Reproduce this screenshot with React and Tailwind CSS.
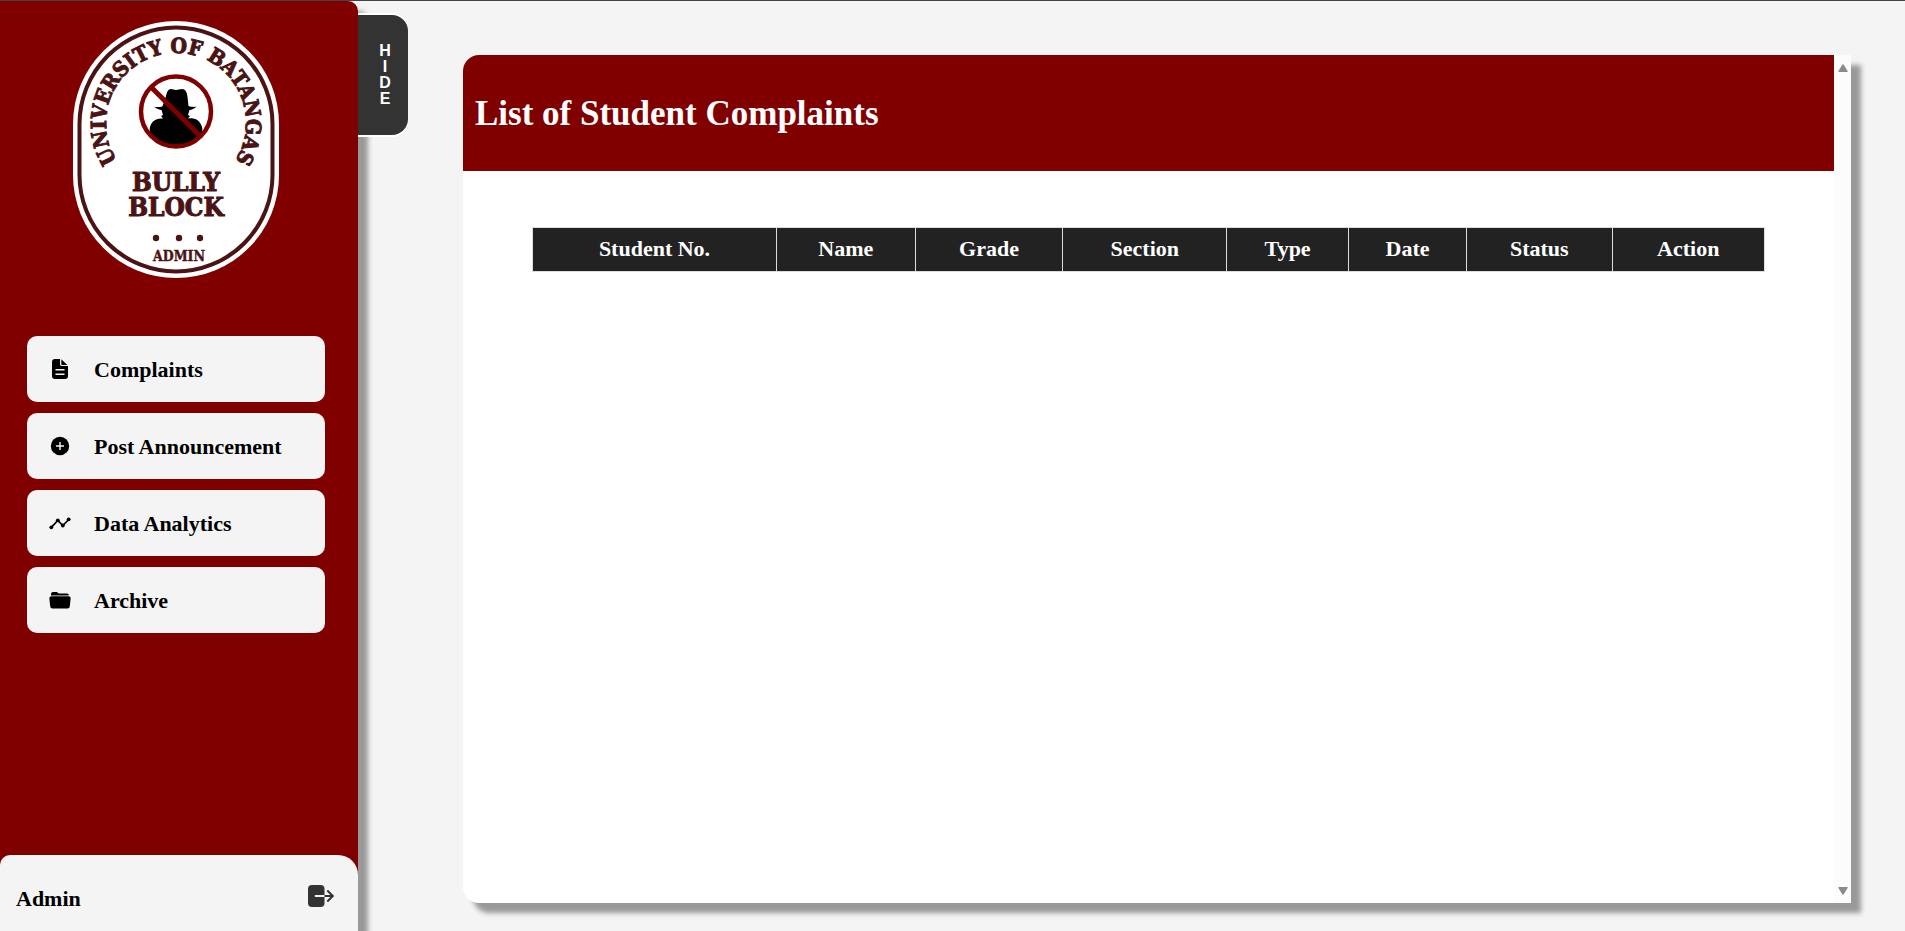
const menu = [
  { label: "Complaints", icon: FileIcon },
  { label: "Post Announcement", icon: PlusIcon },
  { label: "Data Analytics", icon: TimelineIcon },
  { label: "Archive", icon: FolderIcon },
];

const columns = ["Student No.", "Name", "Grade", "Section", "Type", "Date", "Status", "Action"];

function FileIcon() {
  return (
    <svg viewBox="0 0 24 24" className="size-6" aria-hidden="true">
      <path
        fill="currentColor"
        fillRule="evenodd"
        d="M7 2h5v5.200A1.800 1.800 0 0 0 13.800 9H20v10a3 3 0 0 1-3 3H7a3 3 0 0 1-3-3V5a3 3 0 0 1 3-3Zm.5 10v1.400h9V12h-9Zm0 4.500v1.400h9v-1.400h-9Z"
      />
      <path fill="currentColor" d="M13.300 2.300 19.300 7.900h-5a1 1 0 0 1-1-1V2.300Z" />
    </svg>
  );
}

function PlusIcon() {
  return (
    <svg viewBox="0 0 24 24" className="size-6" aria-hidden="true">
      <circle cx="12" cy="12" r="9.200" fill="currentColor" />
      <path d="M12 8v8M8 12h8" stroke="#f4f4f4" strokeWidth="1.400" />
    </svg>
  );
}

function TimelineIcon() {
  return (
    <svg viewBox="0 0 24 24" className="size-6" aria-hidden="true">
      <path d="M3.300 16.300 9.800 9.500 14.800 14.500 20.700 8.500" fill="none" stroke="currentColor" strokeWidth="1.700" />
      <g fill="currentColor">
        <circle cx="3.300" cy="16.300" r="1.900" />
        <circle cx="9.800" cy="9.300" r="1.900" />
        <circle cx="14.800" cy="14.500" r="1.900" />
        <circle cx="20.700" cy="8.300" r="1.900" />
      </g>
    </svg>
  );
}

function FolderIcon() {
  return (
    <svg viewBox="0 0 24 24" className="size-6" aria-hidden="true">
      <path fill="currentColor" d="M3 7.500V6a2 2 0 0 1 2-2h3.500c1 0 1.700 1.400 2.700 1.400H19a1.600 1.600 0 0 1 1.600 2.100Z" />
      <path
        fill="currentColor"
        d="M3.600 8.200h16.800a2.200 2.200 0 0 1 2.200 2.500l-.8 7.600a2.400 2.400 0 0 1-2.400 2.300H4.600a2.400 2.400 0 0 1-2.400-2.300l-.8-7.600a2.200 2.200 0 0 1 2.200-2.500Z"
      />
    </svg>
  );
}

function LogoutIcon() {
  return (
    <svg viewBox="0 0 26 22" className="h-[22px] w-[26px]" fill="none" aria-hidden="true">
      <rect x="0" y="0" width="16.500" height="22" rx="4" fill="#333" />
      <path d="M7.500 11H16.500" stroke="#f4f4f4" strokeWidth="1.800" strokeLinecap="round" />
      <path d="M16.500 11H24M19.300 5.500 24.800 11l-5.500 5.500" stroke="#333" strokeWidth="2" />
    </svg>
  );
}

function Logo() {
  return (
    <svg viewBox="0 0 206 257" className="h-[257px] w-[206px]" role="img" aria-label="University of Batangas Bully Block Admin">
      <rect width="206" height="257" rx="103" fill="#fff" />
      <rect x="6.500" y="6.500" width="193" height="244" rx="96.500" fill="none" stroke="#4a1414" strokeWidth="4" />
      <path id="arch" d="M49.400 147A70 70 0 1 1 156.600 147" fill="none" />
      <g
        fill="#4a1414"
        stroke="#4a1414"
        strokeWidth="1"
        fontWeight="700"
        textAnchor="middle"
        className="font-['DejaVu_Serif_Condensed','DejaVu_Serif',serif]"
      >
        <text fontSize="21">
          <textPath href="#arch" startOffset="50%">UNIVERSITY OF BATANGAS</textPath>
        </text>
        <text fontSize="26">
          <tspan x="103" y="170">BULLY</tspan>
          <tspan x="103" y="195">BLOCK</tspan>
        </text>
        <text x="106" y="240" fontSize="14" strokeWidth="0.400">ADMIN</text>
      </g>
      <g fill="#4a1414">
        <circle cx="83" cy="217" r="3.200" />
        <circle cx="106" cy="217" r="3.200" />
        <circle cx="127" cy="217" r="3.200" />
      </g>
      <path
        d="M93 75c1-4 2-7 5-7 2 0 3 1 5 1s4-1 6-1c4 0 5 4 5.500 8l1 9c3 1 5 1 8 .8-2 2-5 3-7 3.200l-1.500 5 2 1-2 2.500c4-.8 8-.5 11 3 3 4 4 7 3 12-6 7-14 13-26 13-11 0-20-5-26-13-1-5 0-9 3-12 3-2.500 6-3.500 10-3l-2-2.500 2-1-1.500-5c-2-.2-5-1.200-7-3 3 .2 6 .2 8-.8Z"
        fill="#000"
      />
      <circle cx="103" cy="90.500" r="35" fill="none" stroke="#800000" strokeWidth="4.500" />
      <path d="M78 66 127 115" stroke="#800000" strokeWidth="5" />
    </svg>
  );
}

export default function App() {
  return (
    <div className="flex min-h-screen border-t border-[#444] bg-[#f4f4f4] font-['Liberation_Serif',serif] text-black">
      <aside className="relative z-10 flex w-[358px] shrink-0 flex-col rounded-tr-[10px] bg-[#800000] shadow-[10px_10px_5px_#999]">
        <div className="flex justify-center pt-5 pr-1.5">
          <Logo />
        </div>
        <nav className="mt-[58px] flex flex-col gap-[11px] pr-[33px] pl-[27px]">
          {menu.map(({ label, icon: Icon }) => (
            <a
              key={label}
              href="#"
              className="flex h-[66px] items-center gap-[22px] rounded-[10px] bg-[#f4f4f4] pl-[21px] text-[22px] font-bold"
            >
              <Icon />
              {label}
            </a>
          ))}
        </nav>
        <div className="mt-auto flex h-[76px] items-center justify-between rounded-tl-[10px] rounded-tr-[20px] bg-[#f4f4f4] pt-2.5 pr-6 pl-4">
          <span className="text-[22px] font-bold">Admin</span>
          <button type="button" aria-label="Log out" className="pb-1">
            <LogoutIcon />
          </button>
        </div>
      </aside>

      <button
        type="button"
        className="z-10 mt-[14px] flex h-[120px] w-[50px] shrink-0 items-center justify-center rounded-r-[16px] bg-[#333] pl-1 font-['Liberation_Sans',sans-serif] text-base leading-4 font-bold text-white shadow-[0_-2px_0_#fff,0_2px_0_#fff]"
      >
        <span className="w-3 text-center break-all">HIDE</span>
      </button>

      <main className="flex min-w-0 flex-1 pt-[54px] pr-[54px] pb-7 pl-[55px]">
        <section className="flex flex-1 overflow-hidden rounded-l-[16px] bg-white shadow-[10px_10px_5px_#999]">
          <div className="min-w-0 flex-1">
            <header className="flex h-[116px] items-center bg-[#800000] px-3 pt-0.5">
              <h1 className="text-[35px] font-bold text-white">List of Student Complaints</h1>
            </header>
            <div className="px-[69px] pt-14">
              <table className="w-full border-collapse text-[22px] leading-[25px] text-white">
                <thead>
                  <tr className="bg-[#222]">
                    {columns.map((name) => (
                      <th key={name} scope="col" className="border border-[#ddd] px-[9px] pt-2 pb-2.5">
                        {name}
                      </th>
                    ))}
                  </tr>
                </thead>
              </table>
            </div>
          </div>
          <div className="flex w-[17px] shrink-0 flex-col items-center justify-between bg-[#fcfcfc] pt-[9px] pb-2" aria-hidden="true">
            <svg viewBox="0 0 10 8" className="h-2 w-2.5">
              <path d="M5 1 9 7.300H1Z" fill="#8b8b8b" stroke="#8b8b8b" strokeWidth="1.400" strokeLinejoin="round" />
            </svg>
            <svg viewBox="0 0 10 8" className="h-2 w-2.5">
              <path d="M5 7 9 .7H1Z" fill="#8b8b8b" stroke="#8b8b8b" strokeWidth="1.400" strokeLinejoin="round" />
            </svg>
          </div>
        </section>
      </main>
    </div>
  );
}
